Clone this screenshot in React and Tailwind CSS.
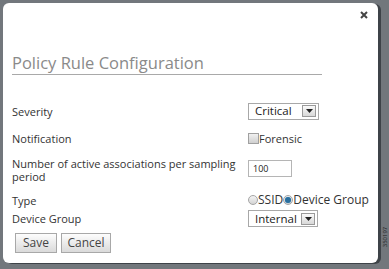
import { useState } from "react"

const font = { fontFamily: '"Open Sans", "Noto Sans", sans-serif' }

function DropArrow() {
  return (
    <span className="w-[14px] h-[12px] border border-[#9a9a9a] bg-gradient-to-b from-[#fafafa] to-[#d8d8d8] flex items-center justify-center">
      <svg width="7" height="4" viewBox="0 0 7 4">
        <path d="M0 0h7L3.5 4z" fill="#222" />
      </svg>
    </span>
  )
}

function Select({ value, width }) {
  return (
    <div className={`h-[17px] border border-[#a8a8a8] bg-white flex items-center justify-between pl-[6px] pr-[2px] ${width}`}>
      <span className="text-[11.5px] text-[#222] leading-none">{value}</span>
      <DropArrow />
    </div>
  )
}

function Radio({ checked }) {
  return (
    <span className="w-[10px] h-[10px] rounded-full border border-[#a5a5a5] bg-gradient-to-b from-[#f4f4f4] to-[#d4d4d4] flex items-center justify-center">
      {checked && <span className="w-[6px] h-[6px] rounded-full bg-[#2a6f9e] shadow-[0_0_1px_#6fb4e0]" />}
    </span>
  )
}

function Row({ label, children, className }) {
  return (
    <div className={`flex ${className}`}>
      <div className="w-[236px] text-[11px] leading-[13px] text-[#333]">{label}</div>
      <div className="flex-1">{children}</div>
    </div>
  )
}

export default function App() {
  const [type] = useState("group")

  return (
    <div className="w-[389px] h-[269px] bg-[#72777c] relative overflow-hidden" style={font}>
      <div className="ml-[3px] mt-[3px] w-[375px] h-[260px] bg-white rounded-[6px] shadow-[3px_1px_0_#3e4348] flex flex-col">
        <div className="flex justify-end pt-[8px] pr-[10px]">
          <svg width="8" height="8" viewBox="0 0 8 8">
            <path d="M1 1l6 6M7 1l-6 6" stroke="#444" strokeWidth="2" />
          </svg>
        </div>

        <div className="ml-[9px] mt-[33px] w-[310px] h-[23px] border-b border-[#a9a9a9] text-[16.5px] leading-[22px] text-[#8a8a8a]">
          Policy Rule Configuration
        </div>

        <div className="pl-[9px]">
          <Row label={<div className="h-[20px] flex items-center">Severity</div>} className="mt-[26px] h-[20px]">
            <div className="h-[20px] flex items-center">
              <Select value="Critical" width="w-[71px]" />
            </div>
          </Row>

          <Row label={<div className="h-[20px] flex items-center">Notification</div>} className="mt-[7px] h-[20px]">
            <div className="h-[20px] flex items-center">
              <span className="w-[11px] h-[11px] border border-[#a0a0a0] bg-gradient-to-b from-[#f0f0f0] to-[#d0d0d0]" />
              <span className="text-[11px] text-[#333] leading-none">Forensic</span>
            </div>
          </Row>

          <Row label="Number of active associations per sampling period" className="mt-[9px] h-[27px]">
            <div className="mt-[3px] w-[44px] h-[17px] border border-[#b5b5b5] bg-white flex items-center pl-[4px]">
              <span className="text-[9px] text-[#222] leading-none">100</span>
            </div>
          </Row>

          <Row label={<div className="h-[18px] flex items-center">Type</div>} className="mt-[7px] h-[18px]">
            <div className="h-[18px] flex items-center text-[12px] text-[#333] leading-none">
              <Radio checked={type === "ssid"} />
              <span>SSID</span>
              <Radio checked={type === "group"} />
              <span>Device Group</span>
            </div>
          </Row>

          <Row label={<div className="h-[19px] flex items-center">Device Group</div>} className="h-[19px]">
            <div className="h-[19px] flex items-center">
              <Select value="Internal" width="w-[70px]" />
            </div>
          </Row>

          <div className="flex gap-[4px] ml-[3px] mt-[5px]">
            <button className="w-[42px] h-[20px] border border-[#a8a8a8] bg-gradient-to-b from-[#fdfdfd] to-[#dadada] text-[12px] text-[#444] leading-none">
              Save
            </button>
            <button className="w-[50px] h-[20px] border border-[#a8a8a8] bg-gradient-to-b from-[#fdfdfd] to-[#dadada] text-[12px] text-[#444] leading-none">
              Cancel
            </button>
          </div>
        </div>
      </div>

      <div className="absolute right-[0px] top-[222px] w-[8px] h-[30px] flex items-center justify-center">
        <span className="-rotate-90 text-[6px] text-[#222] leading-none whitespace-nowrap">350197</span>
      </div>
    </div>
  )
}
